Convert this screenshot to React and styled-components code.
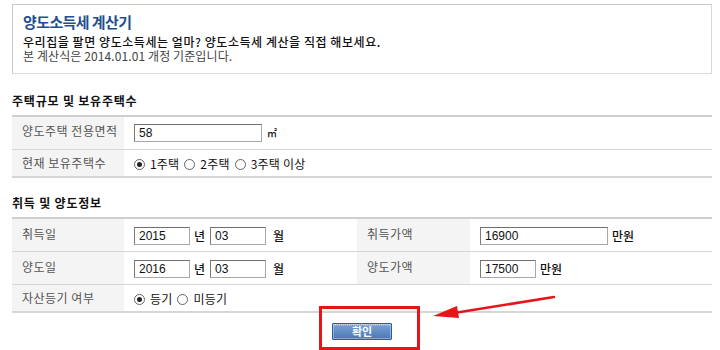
import React from 'react'
import styled, { createGlobalStyle } from 'styled-components'

const GlobalStyle = createGlobalStyle`
  body {
    margin: 0;
    background: #fff;
    font-family: "Noto Sans CJK KR", "Liberation Sans", sans-serif;
    font-size: 12px;
    color: #222;
  }
`

const Page = styled.div`
  width: 700px;
  padding: 4px 0 0 12px;
`

const IntroBox = styled.div`
  border: 1px solid #c8c8c8;
  border-right-color: #d8d8d8;
  border-bottom-color: #dcdcdc;
  padding: 7px 10px 0;
  box-sizing: border-box;
  height: 70px;
`

const Title = styled.h1`
  margin: 0 0 3px;
  font-size: 15px;
  font-weight: 700;
  color: #1f4f8c;
  letter-spacing: -0.6px;
  line-height: 20px;
`

const Line = styled.p`
  margin: 0;
  font-size: 12px;
  line-height: 14px;
  color: ${p => (p.$muted ? '#444' : '#111')};
  font-weight: ${p => (p.$strong ? 500 : 400)};
  letter-spacing: ${p => p.$ls}px;
`

const SectionTitle = styled.h2`
  margin: ${p => p.$top}px 0 0;
  height: ${p => p.$h}px;
  font-size: 12px;
  font-weight: 700;
  line-height: 14px;
  color: #111;
  letter-spacing: 0.8px;
`

const Table = styled.div`
  border-top: 2px solid #cfcfcf;
`

const Row = styled.div`
  display: grid;
  grid-template-columns: ${p => p.$cols};
  height: ${p => p.$h}px;
  border-bottom: ${p => (p.$last ? 2 : 1)}px solid #d6d6d6;
  box-sizing: border-box;
`

const Label = styled.div`
  background: #f4f4f4;
  color: #555;
  padding: ${p => p.$pt || 7}px 0 0 10px;
  letter-spacing: 0.5px;
  line-height: 14px;
`

const Cell = styled.div`
  display: flex;
  align-items: flex-start;
  padding: ${p => p.$pt || 0}px 0 0 10px;
  gap: 4px;
  color: #111;
`

const TextInput = styled.input`
  width: ${p => p.$w}px;
  height: 18px;
  box-sizing: border-box;
  border: 1px solid #a8a8a8;
  border-top-color: #6f6f6f;
  border-left-color: #7a7a7a;
  padding: 0 0 0 4px;
  font-family: "Liberation Sans", sans-serif;
  font-size: 12px;
  color: #111;
  background: #fff;
  margin: 0;
  outline: none;
`

const Unit = styled.span`
  font-size: ${p => (p.$small ? 10 : 12)}px;
  font-weight: 500;
  line-height: 18px;
  margin-left: ${p => p.$ml || 0}px;
  margin-right: ${p => p.$mr || 0}px;
`

const RadioGroup = styled.div`
  display: flex;
  align-items: center;
  gap: 3px;
`

const RadioDot = styled.span`
  width: 11px;
  height: 11px;
  border: 1px solid #666;
  border-radius: 50%;
  box-sizing: border-box;
  display: inline-flex;
  align-items: center;
  justify-content: center;
  background: #fff;
  &::after {
    content: '';
    width: 5px;
    height: 5px;
    border-radius: 50%;
    background: ${p => (p.$checked ? '#222' : 'transparent')};
  }
`

const RadioText = styled.span`
  margin: 0 2px;
  line-height: 14px;
  letter-spacing: 0.2px;
`

const Actions = styled.div`
  position: relative;
  display: flex;
  justify-content: center;
  padding-top: 10px;
  height: 39px;
  box-sizing: border-box;
`

const ConfirmButton = styled.button`
  width: 60px;
  height: 17px;
  border: 1px solid #2f5c95;
  border-radius: 1px;
  background:
    repeating-linear-gradient(90deg, rgba(255,255,255,0.3) 0 1px, transparent 1px 2px) top / 100% 2px no-repeat,
    linear-gradient(#7aa3d6, #4a78b5);
  color: #fff;
  font-family: "Noto Sans CJK KR", sans-serif;
  font-size: 11px;
  font-weight: 700;
  line-height: 13px;
  padding: 0;
  box-shadow: inset 0 0 0 1px rgba(255,255,255,0.35);
`

const Highlight = styled.div`
  position: absolute;
  left: 307px;
  top: -7px;
  width: 101px;
  height: 44px;
  border: 3px solid #e8141b;
  box-sizing: border-box;
  pointer-events: none;
`

const Arrow = styled.svg`
  position: absolute;
  left: 418px;
  top: -20px;
  overflow: visible;
`

const RadioOption = ({ checked, children }) => (
  <>
    <RadioDot $checked={checked} />
    <RadioText>{children}</RadioText>
  </>
)

export default function App () {
  return (
    <Page>
      <GlobalStyle />
      <IntroBox>
        <Title>양도소득세 계산기</Title>
        <Line $strong $ls={0.55}>우리집을 팔면 양도소득세는 얼마? 양도소득세 계산을 직접 해보세요.</Line>
        <Line $muted $ls={0.1}>본 계산식은 2014.01.01 개정 기준입니다.</Line>
      </IntroBox>

      <SectionTitle $top={20} $h={21}>주택규모 및 보유주택수</SectionTitle>
      <Table>
        <Row $cols='112px 1fr' $h={33}>
          <Label $pt={7}>양도주택 전용면적</Label>
          <Cell $pt={7}>
            <TextInput $w={128} defaultValue='58' />
            <Unit $small $ml={1}>㎡</Unit>
          </Cell>
        </Row>
        <Row $cols='112px 1fr' $h={28} $last>
          <Label $pt={6}>현재 보유주택수</Label>
          <Cell $pt={7}>
            <RadioGroup>
              <RadioOption checked>1주택</RadioOption>
              <RadioOption>2주택</RadioOption>
              <RadioOption>3주택 이상</RadioOption>
            </RadioGroup>
          </Cell>
        </Row>
      </Table>

      <SectionTitle $top={18} $h={21}>취득 및 양도정보</SectionTitle>
      <Table>
        <Row $cols='112px 233px 113px 1fr' $h={33}>
          <Label $pt={8}>취득일</Label>
          <Cell $pt={8}>
            <TextInput $w={56} defaultValue='2015' />
            <Unit $mr={1}>년</Unit>
            <TextInput $w={56} defaultValue='03' />
            <Unit $ml={3}>월</Unit>
          </Cell>
          <Label $pt={8}>취득가액</Label>
          <Cell $pt={8}>
            <TextInput $w={128} defaultValue='16900' />
            <Unit>만원</Unit>
          </Cell>
        </Row>
        <Row $cols='112px 233px 113px 1fr' $h={33}>
          <Label $pt={8}>양도일</Label>
          <Cell $pt={8}>
            <TextInput $w={56} defaultValue='2016' />
            <Unit $mr={1}>년</Unit>
            <TextInput $w={56} defaultValue='03' />
            <Unit $ml={3}>월</Unit>
          </Cell>
          <Label $pt={8}>양도가액</Label>
          <Cell $pt={8}>
            <TextInput $w={56} defaultValue='17500' />
            <Unit>만원</Unit>
          </Cell>
        </Row>
        <Row $cols='112px 1fr' $h={28} $last>
          <Label $pt={6}>자산등기 여부</Label>
          <Cell $pt={7}>
            <RadioGroup>
              <RadioOption checked>등기</RadioOption>
              <RadioOption>미등기</RadioOption>
            </RadioGroup>
          </Cell>
        </Row>
      </Table>

      <Actions>
        <ConfirmButton type='button'>확인</ConfirmButton>
        <Highlight />
        <Arrow width='126' height='24' viewBox='0 0 126 24'>
          <line x1='124' y1='4' x2='24' y2='20' stroke='#e8141b' strokeWidth='2.5' strokeLinecap='round' />
          <polygon points='3,23 27,13 29,25' fill='#e8141b' />
        </Arrow>
      </Actions>
    </Page>
  )
}
